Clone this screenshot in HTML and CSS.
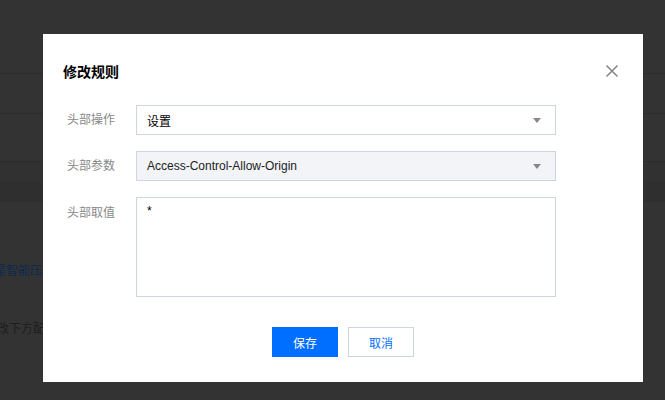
FILE: index.html
```html
<!DOCTYPE html>
<html lang="zh-CN">
<head>
<meta charset="utf-8">
<link rel="stylesheet" href="styles.css">
</head>
<body>
<div class="page">
  <div class="band b1"></div>
  <div class="band b2"></div>
  <div class="band b3"></div>
  <div class="band b4"></div>
  <div class="band b5"></div>
  <p class="bg-link">是智能压缩</p>
  <p class="bg-text">改下方配置</p>
</div>
<div class="mask">
  <div class="dialog">
    <div class="dialog-head">
      <h3 class="dialog-title">修改规则</h3>
      <button class="close" aria-label="关闭">
        <svg width="14" height="14" viewBox="0 0 14 14"><path d="M1.5 1.5L12.5 12.5M12.5 1.5L1.5 12.5" stroke="#888" stroke-width="1.6" fill="none"/></svg>
      </button>
    </div>
    <div class="form">
      <div class="row">
        <label class="label">头部操作</label>
        <div class="select"><span>设置</span><i class="arrow"></i></div>
      </div>
      <div class="row">
        <label class="label">头部参数</label>
        <div class="select disabled"><span>Access-Control-Allow-Origin</span><i class="arrow"></i></div>
      </div>
      <div class="row">
        <label class="label">头部取值</label>
        <div class="textarea">*</div>
      </div>
    </div>
    <div class="footer">
      <button class="btn primary">保存</button>
      <button class="btn">取消</button>
    </div>
  </div>
</div>
</body>
</html>
```
FILE: styles.css
```css
* { box-sizing: border-box; }
html, body { margin: 0; padding: 0; }
body {
  width: 665px;
  height: 400px;
  overflow: hidden;
  background: #333;
  font-family: "Liberation Sans", "Noto Sans CJK SC", Arial, sans-serif;
  font-size: 12px;
  position: relative;
}
.page {
  display: flex;
  flex-direction: column;
  height: 400px;
}
.band { border-bottom: 1px solid #2b2b2b; flex: none; }
.b1 { height: 74px; }
.b2 { height: 40px; }
.b3 { height: 48px; }
.b4 { height: 20px; border-bottom: none; background: #313131; }
.b5 { height: 20px; border-bottom: none; background: #2f2f2f; }
.bg-link {
  margin: 61px 0 0 -6px;
  color: #0c2a52;
  font-size: 12px;
  line-height: 16px;
  white-space: nowrap;
}
.bg-text {
  margin: 42px 0 0 -3px;
  color: #1e1e1e;
  font-size: 12px;
  line-height: 16px;
  white-space: nowrap;
}
.mask {
  position: absolute;
  left: 0; top: 0;
  width: 665px; height: 400px;
}
.dialog {
  position: absolute;
  left: 43px; top: 34px;
  width: 600px;
  height: 348px;
  background: #fff;
  padding: 0 20px;
}
.dialog-head {
  display: flex;
  align-items: center;
  justify-content: space-between;
  height: 72px;
  padding-top: 2px;
}
.dialog-title {
  margin: 0;
  font-size: 14px;
  font-weight: 700;
  color: #000;
}
.close {
  border: 0; background: none; padding: 0;
  width: 14px; height: 14px;
  margin-right: 4px;
  display: flex;
}
.form {
  display: flex;
  flex-direction: column;
  gap: 16px;
  padding-left: 4px;
  margin-top: -1px;
}
.row { display: flex; align-items: flex-start; }
.label {
  width: 69px;
  color: #888;
  font-size: 12px;
  line-height: 30px;
}
.select {
  width: 420px;
  height: 30px;
  border: 1px solid #cfd5de;
  display: flex;
  align-items: center;
  justify-content: space-between;
  padding: 0 14px 0 10px;
  color: #000;
  font-size: 12px;
}
.select.disabled { background: #f2f4f8; color: #222; }
.arrow {
  width: 0; height: 0;
  border-left: 4px solid transparent;
  border-right: 4px solid transparent;
  border-top: 5px solid #888;
}
.textarea {
  width: 420px;
  height: 100px;
  border: 1px solid #cfd5de;
  padding: 4px 10px;
  color: #000;
  font-size: 12px;
  line-height: 18px;
}
.row:nth-child(3) .label { line-height: 18px; padding-top: 7px; }
.footer {
  display: flex;
  justify-content: center;
  gap: 10px;
  margin-top: 30px;
}
.btn {
  width: 66px;
  height: 30px;
  border: 1px solid #cfd5de;
  background: #fff;
  color: #006eff;
  font-family: inherit;
  font-size: 12px;
  padding: 0;
}
.btn.primary {
  background: #006eff;
  border-color: #006eff;
  color: #fff;
}
```
